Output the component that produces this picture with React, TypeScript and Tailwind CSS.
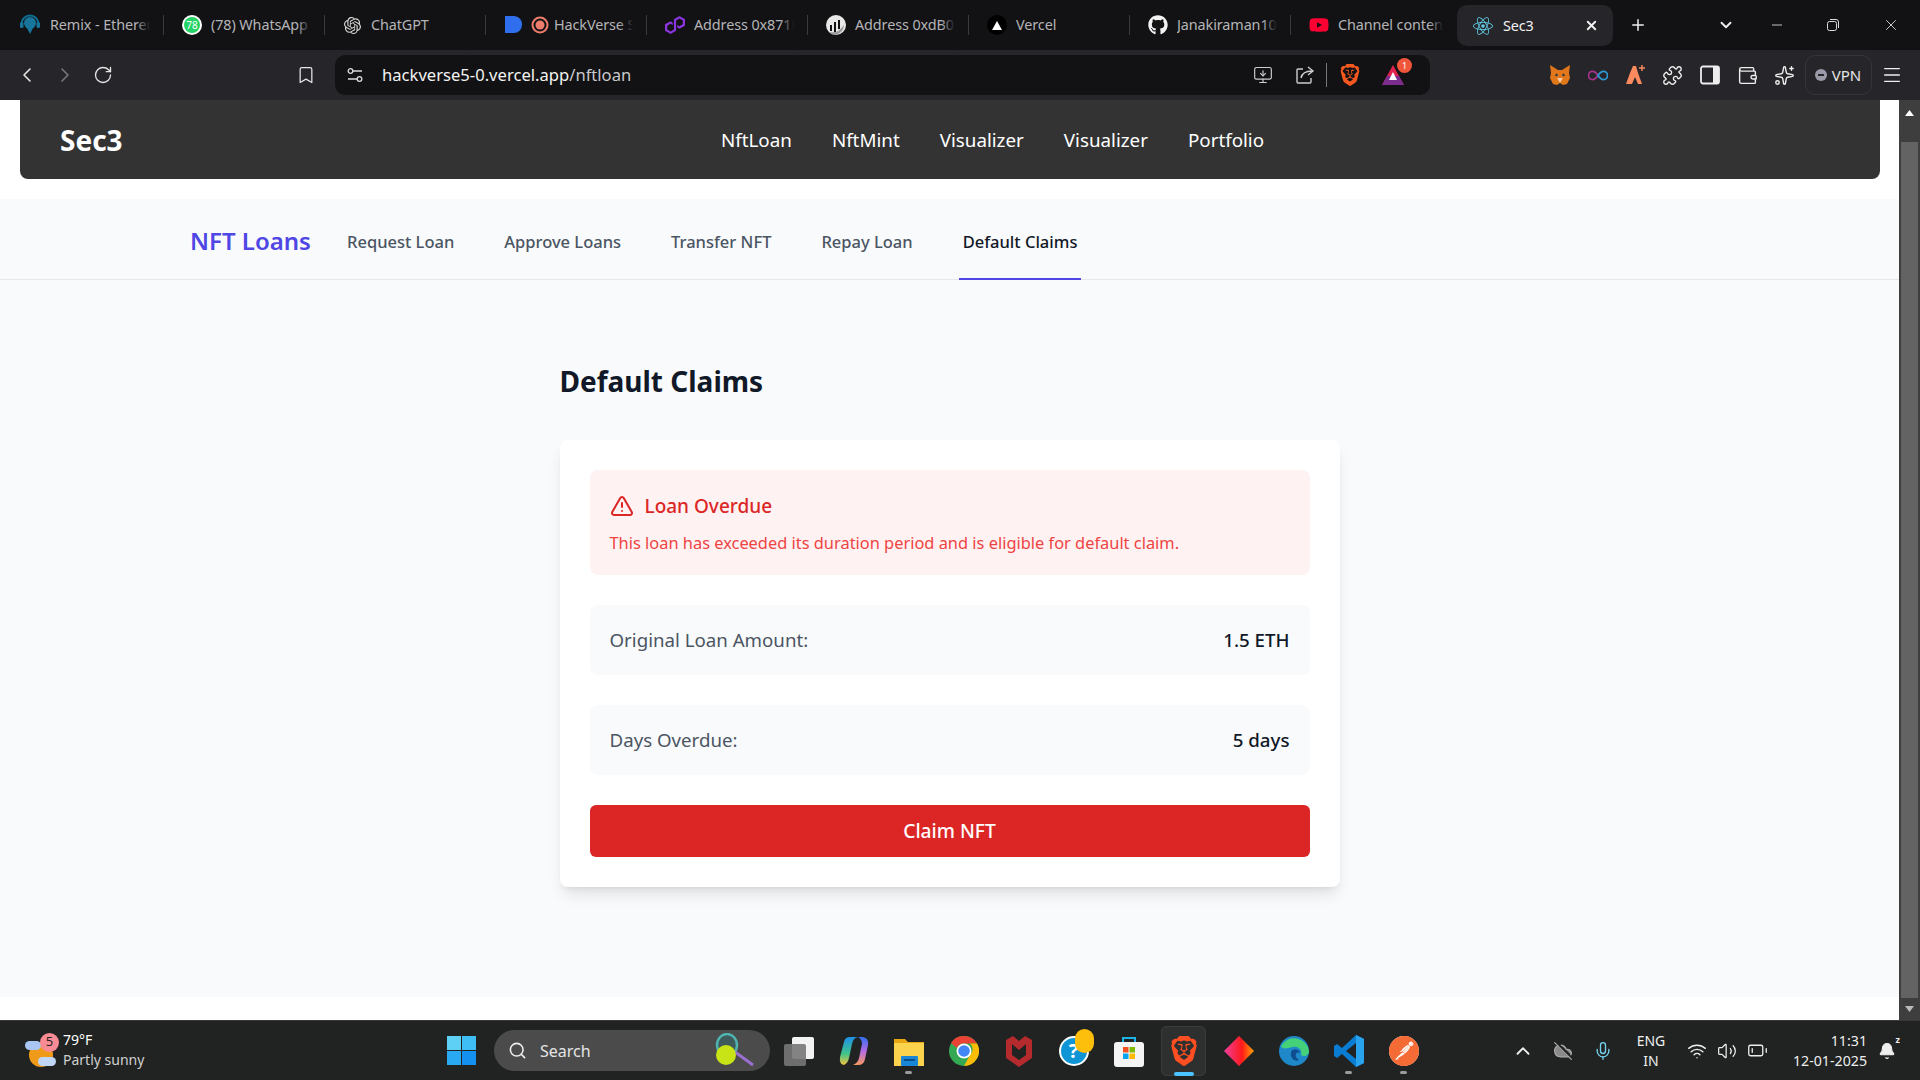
import React from "react";
import { FaGithub, FaReact, FaYoutube } from "react-icons/fa";
import { SiBrave, SiOpenai, SiPolygon, SiPostman } from "react-icons/si";
import { ChevronLeft, ChevronRight, RotateCw, Bookmark, X, Plus, ChevronDown, Minus, MonitorDown, Puzzle, Wallet, Sparkles, Menu, Search, ChevronUp, Mic, Wifi, Volume2, BatteryLow, CloudOff, Bell, TriangleAlert } from "lucide-react";

const ui = "font-['Noto_Sans','Open_Sans',sans-serif]";

function Tab({ icon, title, w = "w-[161px]", sep = true, tight = false }: { icon: React.ReactNode; title: string; w?: string; sep?: boolean; tight?: boolean }) {
  return (
    <div className={`${w} h-[50px] flex items-center pl-[18px] pr-[14px] relative overflow-hidden`}>
      <div className={`flex items-center shrink-0 gap-[6px] ${tight ? "mr-[4px]" : "mr-[9px]"}`}>{icon}</div>
      <span className="text-[14.4px] text-[#b5b5b8] whitespace-nowrap overflow-hidden tracking-[-0.1px]">{title}</span>
      <div className="absolute right-[14px] top-0 h-full w-[14px] bg-gradient-to-r from-transparent to-[#121214] pointer-events-none" />
      {sep && <div className="absolute right-0 top-[15px] h-[20px] w-px bg-[#3a3a3e]" />}
    </div>
  );
}

function Slot({ w, children }: { w: string; children: React.ReactNode }) {
  return <div className={`${w} h-full flex items-center justify-center shrink-0`}>{children}</div>;
}

function TabBar() {
  return (
    <div className="h-[50px] bg-[#121214] flex items-start pl-[3px] shrink-0">
      <Tab title="Remix - Ethereum" icon={<svg width="20" height="22" viewBox="0 0 20 22" className="-ml-[1px] mr-[1px]"><circle cx="10" cy="9" r="6" fill="#17759c" /><path d="M1.500 10a8.500 8.500 0 0 1 17 0" fill="none" stroke="#0f6c92" strokeWidth="2" /><rect x="0" y="8" width="3.500" height="6" rx="1.500" fill="#17759c" /><rect x="16.500" y="8" width="3.500" height="6" rx="1.500" fill="#17759c" /><path d="M7 14h6l-3 6z" fill="#17759c" /></svg>} />
      <Tab title="(78) WhatsApp" icon={<span className="w-[20px] h-[20px] rounded-full bg-white flex items-center justify-center"><span className="w-[16px] h-[16px] rounded-full bg-[#25d366] text-[10px] leading-none text-white flex items-center justify-center">78</span></span>} />
      <Tab title="ChatGPT" icon={<SiOpenai size={17} color="#d9d9d9" className="mx-[1px]" />} />
      <Tab tight title="HackVerse Submission" icon={<><svg width="20" height="20" viewBox="0 0 20 20"><path d="M1 1h9a8 8 0 0 1 8 9 8 8 0 0 1-8 8H1z" fill="#2f6fed" /></svg><svg width="20" height="20" viewBox="0 0 20 20"><circle cx="10" cy="10" r="7.500" fill="none" stroke="#ee7c6b" strokeWidth="2" /><circle cx="10" cy="10" r="4.500" fill="#ee7c6b" /></svg></>} />
      <Tab title="Address 0x871D" icon={<SiPolygon size={20} color="#8b35e0" />} />
      <Tab title="Address 0xdB0F" icon={<svg width="20" height="20" viewBox="0 0 20 20"><circle cx="10" cy="10" r="10" fill="#e8e8e8" /><path d="M5 10v6M9 7v10M13 5v9" stroke="#121214" strokeWidth="2" /><path d="M3 17q9 2 15-7 0 7-8 10-5 0-7-3z" fill="#9a9a9a" /></svg>} />
      <Tab title="Vercel" icon={<span className="w-[20px] h-[20px] rounded-full bg-black flex items-center justify-center"><svg width="10" height="9" viewBox="0 0 10 9"><path d="M5 0l5 9H0z" fill="#fff" /></svg></span>} />
      <Tab title="Janakiraman10242" icon={<FaGithub size={20} color="#f2f2f2" />} />
      <Tab title="Channel content" w="w-[166px]" sep={false} icon={<FaYoutube size={20} color="#ff0033" />} />
      <div className="w-[156px] h-[41px] mt-[5px] bg-[#26262a] rounded-[10px] flex items-center pl-[16px] pr-[14px] text-[14.4px] text-[#f2f2f2]">
        <FaReact size={20} color="#61c8e0" className="mr-[10px]" />
        <span className="tracking-[-0.1px]">Sec3</span>
        <X size={15} strokeWidth={3} color="#f2f2f2" className="ml-auto" />
      </div>
      <Slot w="w-[50px]"><Plus size={18} color="#eee" /></Slot>
      <div className="w-[45px]" />
      <Slot w="w-[36px]"><ChevronDown size={18} color="#eee" strokeWidth={2.5} /></Slot>
      <div className="w-[19px]" />
      <Slot w="w-[28px]"><Minus size={16} color="#ddd" strokeWidth={1.3} /></Slot>
      <div className="w-[28px]" />
      <Slot w="w-[28px]"><svg width="14" height="14" viewBox="0 0 14 14" fill="none" stroke="#ddd"><rect x="1.500" y="3.500" width="9" height="9" rx="2" /><path d="M4 1.500h6a2.500 2.500 0 0 1 2.500 2.500v6" /></svg></Slot>
      <div className="w-[30px]" />
      <Slot w="w-[28px]"><X size={18} color="#ddd" strokeWidth={1.2} /></Slot>
    </div>
  );
}

function ToolBar() {
  return (
    <div className="h-[50px] bg-[#26262a] flex items-center pl-[8px] shrink-0">
      <Slot w="w-[38px]"><ChevronLeft size={24} color="#e5e5e5" strokeWidth={1.6} /></Slot>
      <Slot w="w-[38px]"><ChevronRight size={24} color="#77777b" strokeWidth={1.6} /></Slot>
      <Slot w="w-[38px]"><RotateCw size={20} color="#e5e5e5" strokeWidth={1.6} /></Slot>
      <div className="w-[165px]" />
      <Slot w="w-[38px]"><Bookmark size={20} color="#e5e5e5" strokeWidth={1.5} /></Slot>
      <div className="w-[10px]" />
      <div className="w-[1095px] h-[40px] bg-[#121214] rounded-[10px] flex items-center">
        <Slot w="w-[40px]"><svg width="18" height="18" viewBox="0 0 18 18" fill="none" stroke="#ddd" strokeWidth="1.300"><circle cx="4.500" cy="5" r="2.300" /><path d="M7 5h9M2 13h9" /><circle cx="13.500" cy="13" r="2.300" /></svg></Slot>
        <span className="ml-[7px] text-[16.6px] text-[#f2f2f2]">hackverse5-0.vercel.app<span className="text-[#c9c9cc]">/nftloan</span></span>
        <div className="ml-auto flex items-center h-full">
          <Slot w="w-[42px]"><MonitorDown size={20} color="#ccc" strokeWidth={1.4} /></Slot>
          <Slot w="w-[42px]"><svg width="20" height="20" viewBox="0 0 20 20" fill="none" stroke="#ccc" strokeWidth="1.400"><path d="M8 4H3a1 1 0 0 0-1 1v12a1 1 0 0 0 1 1h12a1 1 0 0 0 1-1v-4" /><path d="M6 13c1-5 5-7 11-7M13 2l5 4-5 4" /></svg></Slot>
          <div className="w-px h-[24px] bg-[#777]" />
          <Slot w="w-[45px]"><SiBrave size={22} color="#f5571f" /></Slot>
          <div className="w-[42px] h-full flex items-center justify-center relative">
            <svg width="22" height="20" viewBox="0 0 22 20"><path d="M11 0l11 20H0z" fill="#e0234e" /><path d="M0 20l5-9h12l5 9z" fill="#7b2d8e" /><path d="M11 7l4 8H7z" fill="#fff" /></svg>
            <span className="absolute top-[3px] right-[2px] w-[15px] h-[15px] rounded-full bg-[#f0563a] text-white text-[9px] flex items-center justify-center">1</span>
          </div>
          <div className="w-[16px]" />
        </div>
      </div>
      <div className="w-[111px]" />
      <div className="w-[37.5px] h-full flex items-center justify-center"><svg width="22" height="22" viewBox="0 0 22 22"><path d="M1 1l8 5h4l8-5-1 8 1 5-3 6-4 1-3-2-3 2-4-1-3-6 1-5z" fill="#e2761b" /><path d="M8 14h6l-3 5z" fill="#f6c9a0" /><circle cx="7.500" cy="11" r="1.200" fill="#233447" /><circle cx="14.500" cy="11" r="1.200" fill="#233447" /></svg></div>
      <div className="w-[37.5px] h-full flex items-center justify-center pl-[2px]"><svg width="20" height="11" viewBox="0 0 22 12" fill="none" strokeWidth="2"><path d="M11 6C9 3 7 1.500 5 1.500a4.500 4.500 0 0 0 0 9c2 0 4-1.500 6-4.500z" stroke="#a8328f" /><path d="M11 6c2-3 4-4.500 6-4.500a4.500 4.500 0 0 1 0 9c-2 0-4-1.500-6-4.500z" stroke="#2d9ad6" /></svg></div>
      <div className="w-[37.5px] h-full flex items-center justify-center"><svg width="20" height="22" viewBox="0 0 20 22" fill="#fb8b5e"><path d="M8 2h3l2 7 4 11h-4l-3-7-3 7H1l4-11z" /><path d="M17 1v6M14 4h6" stroke="#fb8b5e" strokeWidth="1.400" /></svg></div>
      <div className="w-[37.5px] h-full flex items-center justify-center"><Puzzle size={21} color="#eee" strokeWidth={1.6} /></div>
      <div className="w-[37.5px] h-full flex items-center justify-center"><svg width="20" height="20" viewBox="0 0 20 20"><rect x="1" y="1.500" width="18" height="17" rx="2" fill="none" stroke="#eee" strokeWidth="1.800" /><rect x="13" y="2" width="6" height="16" fill="#eee" /></svg></div>
      <div className="w-[37.5px] h-full flex items-center justify-center"><Wallet size={21} color="#eee" strokeWidth={1.6} /></div>
      <div className="w-[37.5px] h-full flex items-center justify-center"><Sparkles size={21} color="#eee" strokeWidth={1.6} /></div>
      <div className="ml-[1px] w-[67px] h-[40px] border border-[#35353a] rounded-[10px] flex items-center justify-center gap-[5px] text-[15px] text-[#e5e5e5]">
        <span className="w-[12px] h-[12px] rounded-full bg-[#9a9aa8] flex items-center justify-center"><span className="w-[6px] h-[2px] bg-[#26262a]" /></span>VPN
      </div>
      <div className="w-[1px]" />
      <Slot w="w-[38px]"><Menu size={22} color="#eee" strokeWidth={1.4} /></Slot>
    </div>
  );
}

function Page() {
  const links = ["Request Loan", "Approve Loans", "Transfer NFT", "Repay Loan", "Default Claims"];
  return (
    <div className={`flex-1 min-h-0 flex ${ui}`}>
      <div className="flex-1 min-w-0 bg-white flex flex-col">
        <div className="ml-[20px] w-[1860px] h-[79px] bg-[#333333] rounded-b-[8px] flex items-center pl-[40px] shrink-0">
          <span className="w-[661px] text-[28px] font-bold text-white">Sec3</span>
          <div className="flex gap-[40px] pt-[2px] text-[18.8px] text-white">
            <span>NftLoan</span><span>NftMint</span><span>Visualizer</span><span>Visualizer</span><span>Portfolio</span>
          </div>
        </div>
        <div className="mt-[20px] flex-1 bg-[#f9fafb] flex flex-col min-h-0">
          <div className="h-[81px] border-b border-[#e5e7eb] flex items-stretch pl-[190px] shrink-0">
            <span className="self-center pt-[3px] text-[24px] font-semibold text-[#4f46e5] w-[153px]">NFT Loans</span>
            <div className="flex gap-[42px] text-[16.500px] text-[#4b5563]">
              {links.map((l, i) => (
                <span key={l} className={`px-[4px] pt-[7px] flex items-center font-medium h-[81px] border-b-2 ${i === 4 ? "border-[#4f46e5] text-[#111827]" : "border-transparent"}`}>{l}</span>
              ))}
            </div>
          </div>
          <div className="pt-[83px] w-[780px] mx-auto">
            <h2 className="text-[28px] font-bold text-[#111827] leading-[36px]">Default Claims</h2>
            <div className="mt-[41px] bg-white rounded-[8px] shadow-lg p-[30px] flex flex-col gap-[30px]">
              <div className="h-[105px] bg-[#fef2f2] rounded-[8px] px-[20px] pt-[22px]">
                <div className="flex items-center gap-[11px] text-[#dc2626] text-[19px] font-medium leading-[28px]">
                  <TriangleAlert size={24} strokeWidth={2} /> Loan Overdue
                </div>
                <p className="mt-[11px] text-[16.400px] text-[#ef4444] leading-[24px]">This loan has exceeded its duration period and is eligible for default claim.</p>
              </div>
              <div className="h-[70px] bg-[#f9fafb] rounded-[8px] px-[20px] flex items-center justify-between text-[18.700px]">
                <span className="text-[#4b5563]">Original Loan Amount:</span><span className="font-medium text-[#111827]">1.5 ETH</span>
              </div>
              <div className="h-[70px] bg-[#f9fafb] rounded-[8px] px-[20px] flex items-center justify-between text-[18.700px]">
                <span className="text-[#4b5563]">Days Overdue:</span><span className="font-medium text-[#111827]">5 days</span>
              </div>
              <button className="h-[52px] bg-[#dc2626] rounded-[6px] text-white text-[19.200px] font-medium">Claim NFT</button>
            </div>
          </div>
        </div>
        <div className="h-[23px] bg-white shrink-0" />
      </div>
      <div className="w-[21px] bg-[#3e3e3e] flex flex-col items-center shrink-0">
        <svg width="9" height="6" viewBox="0 0 9 6" className="mt-[10px]"><path d="M4.500 0L9 6H0z" fill="#fff" /></svg>
        <div className="mt-[26px] w-[17px] h-[856px] bg-[#636363]" />
        <svg width="9" height="6" viewBox="0 0 9 6" className="mt-auto mb-[8px]"><path d="M0 0h9L4.500 6z" fill="#bbb" /></svg>
      </div>
    </div>
  );
}

function Dock({ children }: { children: React.ReactNode }) {
  return <div className="w-[55px] h-full flex items-center justify-center relative shrink-0">{children}</div>;
}

function Taskbar() {
  const dot = <span className="absolute bottom-[6px] w-[7px] h-[3px] rounded-full bg-[#9a9a9a]" />;
  return (
    <div className="h-[60px] bg-[#212322] border-t border-[#3a3a3a] flex items-center shrink-0 font-['Noto_Sans',sans-serif] text-white">
      <div className="w-[462px] pl-[25px] flex items-center shrink-0 -mr-[15px]">
        <div className="relative w-[34px] h-[36px]">
          <span className="absolute left-[4px] top-[10px] w-[24px] h-[24px] rounded-full bg-[#f09a1a]" />
          <span className="absolute left-0 top-[8px] w-[16px] h-[9px] rounded-full bg-[#a9c6f2]" />
          <span className="absolute left-[13px] top-[24px] w-[18px] h-[9px] rounded-full bg-[#c0d6f7]" />
          <span className="absolute left-[15px] top-[0px] w-[19px] h-[19px] rounded-full bg-[#f98b95] text-[#222] text-[13px] flex items-center justify-center">5</span>
        </div>
        <div className="ml-[4px] -mt-[2px] flex flex-col text-[14px] leading-[20px]">
          <span>79°F</span><span className="text-[#cfcfcf]">Partly sunny</span>
        </div>
      </div>
      <svg width="29" height="36" viewBox="0 0 29 36" className="shrink-0"><rect y="3" width="14" height="14" fill="#5fd0f5" /><rect x="15" y="3" width="14" height="14" fill="#3fbdf5" /><rect y="18" width="14" height="14" fill="#2aa9f3" /><rect x="15" y="18" width="14" height="14" fill="#1491f0" /></svg>
      <div className="ml-[18px] w-[276px] h-[41px] rounded-full bg-[#4a4b4a] flex items-center pl-[14px] shrink-0 relative">
        <Search size={19} color="#eee" strokeWidth={2} />
        <span className="ml-[13px] text-[16px] text-[#e5e5e5]">Search</span>
        <svg width="44" height="36" viewBox="0 0 44 36" className="absolute right-[13px] top-[3px]"><ellipse cx="14" cy="12" rx="10" ry="11" fill="#3f5a5a" stroke="#4fb3b0" strokeWidth="2.500" /><path d="M22 19l18 13" stroke="#9a6fd0" strokeWidth="3" /><circle cx="13" cy="22" r="10" fill="#c8e316" /></svg>
      </div>
      <div className="w-[1px]" />
      <Dock><svg width="30" height="30" viewBox="0 0 30 30"><rect x="8" y="1" width="22" height="22" rx="2" fill="#f2f2f2" /><rect y="8" width="22" height="22" rx="2" fill="#777" opacity="0.9" /></svg></Dock>
      <Dock><svg width="30" height="30" viewBox="0 0 30 30"><defs><linearGradient id="cp1" x1="0" y1="0" x2="0" y2="1"><stop offset="0" stopColor="#1f8fe8" /><stop offset="0.6" stopColor="#3fc48a" /><stop offset="1" stopColor="#f6c33c" /></linearGradient><linearGradient id="cp2" x1="0" y1="0" x2="0" y2="1"><stop offset="0" stopColor="#2f6ff0" /><stop offset="0.5" stopColor="#b56ae6" /><stop offset="1" stopColor="#f59a5c" /></linearGradient></defs><path d="M19 1h5q6 1 5 8l-3 14q-1 6-7 6h-5q5-2 6-7l3-14q0-5-4-7z" fill="url(#cp2)" /><path d="M11 1h8q-5 1-6 7l-3 14q-1 5-5 7Q0 28 1 21L5 6q1-5 6-5z" fill="url(#cp1)" /></svg></Dock>
      <Dock>
        <svg width="30" height="30" viewBox="0 0 30 30"><path d="M0 3h11l3 3h16v24H0z" fill="#e8a713" /><rect y="7" width="30" height="23" fill="#fcd34d" /><rect x="7" y="20" width="17" height="10" rx="1" fill="#1a86d6" /><rect x="10" y="23" width="11" height="2" fill="#0b4f8a" /></svg>
        {dot}
      </Dock>
      <Dock><svg width="30" height="30" viewBox="0 0 30 30"><circle cx="15" cy="15" r="15" fill="#34a853" /><path d="M15 0a15 15 0 0 1 13 7.500H15a7.500 7.500 0 0 0-7 4.500L2 7a15 15 0 0 1 13-7z" fill="#ea4335" /><path d="M28 7.500A15 15 0 0 1 15 30l6-11a7.500 7.500 0 0 0 0-11.500z" fill="#fbbc05" /><circle cx="15" cy="15" r="7.500" fill="#fff" /><circle cx="15" cy="15" r="5.800" fill="#4285f4" /></svg></Dock>
      <Dock><svg width="26" height="32" viewBox="0 0 26 32"><path d="M0 5l7-4 6 5 6-5 7 4v18l-13 9L0 23z" fill="#b52a2d" /><path d="M6 9l7 6 7-6v11l-7 5-7-5z" fill="#212322" /></svg></Dock>
      <Dock>
        <div className="relative w-[30px] h-[30px] rounded-full bg-[#0f94d6] border-2 border-white flex items-center justify-center text-white font-bold text-[20px]">?
          <span className="absolute -right-[7px] -top-[9px] w-[19px] h-[24px] rounded-full bg-[#fdbf0b]" />
        </div>
      </Dock>
      <Dock>
        <svg width="30" height="32" viewBox="0 0 30 32"><path d="M9 8V3h12v5" fill="none" stroke="#1cb4e8" strokeWidth="2" /><rect y="7" width="30" height="25" rx="3" fill="#f4f4f4" /><rect x="9" y="12" width="5.500" height="5.500" fill="#f25022" /><rect x="15.500" y="12" width="5.500" height="5.500" fill="#7fba00" /><rect x="9" y="18.500" width="5.500" height="5.500" fill="#00a4ef" /><rect x="15.500" y="18.500" width="5.500" height="5.500" fill="#ffb900" /></svg>
      </Dock>
      <Dock>
        <div className="absolute left-[5px] top-[5px] w-[45px] h-[50px] bg-[#2e302f] border border-[#3a3c3b] rounded-[5px]" />
        <SiBrave size={30} color="#ff4f22" className="relative" />
        <span className="absolute bottom-[4px] w-[20px] h-[4px] rounded-full bg-[#4cc2ff]" />
      </Dock>
      <Dock><svg width="30" height="30" viewBox="0 0 30 30"><defs><linearGradient id="dm" x1="0" x2="1"><stop offset="0" stopColor="#ef3f9f" /><stop offset="0.6" stopColor="#ff1a1a" /><stop offset="1" stopColor="#ffa500" /></linearGradient></defs><path d="M15 0l15 15-15 15L0 15z" fill="url(#dm)" /></svg></Dock>
      <Dock><svg width="30" height="30" viewBox="0 0 30 30"><circle cx="15" cy="15" r="15" fill="#1e88c9" /><path d="M2 10A15 15 0 0 1 30 15c0 5-5 6-8 4 2-6-4-9-8-8-6 1-10 3-12-1z" fill="#45d07a" /><path d="M12 17c0-5 8-5 9 0-5-2-6 4-1 7-2 2-9 0-8-7z" fill="#0e4e8e" /></svg></Dock>
      <Dock>
        <svg width="30" height="32" viewBox="0 0 30 32"><path d="M22 0l8 4v24l-8 4L8 19l-5 4-3-2V11l3-2 5 4z" fill="#0a7cd1" /><path d="M22 8L12 16l10 8z" fill="#212322" /><path d="M22 0l8 4v24l-8 4z" fill="#2aa3ef" /></svg>
        {dot}
      </Dock>
      <Dock>
        <span className="w-[30px] h-[30px] rounded-full bg-white flex items-center justify-center"><SiPostman size={30} color="#f56b35" /></span>
        {dot}
      </Dock>
      <div className="w-[72px]" />
      <Slot w="w-[40px]"><ChevronUp size={22} color="#eee" strokeWidth={2} /></Slot>
      <Slot w="w-[40px]"><CloudOff size={20} color="#aaa" fill="#8a8a8a" strokeWidth={1.5} /></Slot>
      <Slot w="w-[40px]"><Mic size={20} color="#75d3f0" strokeWidth={1.6} /></Slot>
      <div className="w-[56px] flex flex-col items-center text-[14px] leading-[20px] text-[#eee] shrink-0"><span>ENG</span><span>IN</span></div>
      <Slot w="w-[35px]"><Wifi size={20} color="#eee" strokeWidth={1.7} /></Slot>
      <Slot w="w-[26px]"><Volume2 size={20} color="#eee" strokeWidth={1.5} /></Slot>
      <Slot w="w-[35px]"><BatteryLow size={21} color="#eee" strokeWidth={1.5} /></Slot>
      <div className="w-[92px] flex flex-col items-end text-[14.200px] leading-[20px] text-[#eee] shrink-0"><span>11:31</span><span>12-01-2025</span></div>
      <div className="w-[40px] h-full flex items-center justify-center relative shrink-0">
        <Bell size={18} color="#eee" fill="#eee" strokeWidth={1.500} />
        <span className="absolute top-[14px] right-[7px] text-[9px] leading-none font-bold text-[#eee]">z</span>
      </div>
    </div>
  );
}

export default function App() {
  return (
    <div className={`w-[1920px] h-[1080px] flex flex-col overflow-hidden bg-white ${ui}`}>
      <TabBar />
      <ToolBar />
      <Page />
      <Taskbar />
    </div>
  );
}
